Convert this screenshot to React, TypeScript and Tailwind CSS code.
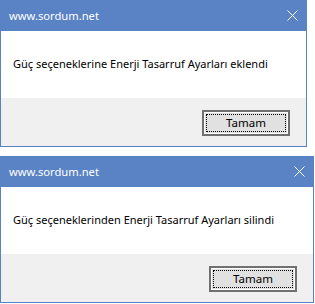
import React from "react";

function Dialog({ width, message }: { width: string; message: string }) {
  return (
    <div className={`${width} flex flex-col border border-[#5a83c6] bg-white`} style={{ fontFamily: '"Noto Sans", sans-serif' }}>
      <div className="flex h-[30px] items-center justify-between bg-[#5a83c6] pl-2 pr-[8px] text-[11.2px] text-white">
        <span className="leading-none pb-[1px]">www.sordum.net</span>
        <svg width="11" height="11" viewBox="0 0 11 11" className="mb-[1px]">
          <path d="M0.5 0.5 L10.5 10.5 M10.5 0.5 L0.5 10.5" stroke="white" strokeWidth="1" />
        </svg>
      </div>
      <div className="flex h-[67px] items-center bg-white pl-3 text-[11px] text-black">
        <span className="pb-[1px]">{message}</span>
      </div>
      <div className="flex h-[48px] items-start justify-end bg-[#f0f0f0] pr-4 pt-[12px]">
        <button className="h-[26px] w-[88px] border-2 border-[#707070] bg-[#e1e1e1] text-[11.5px] text-black shadow-[inset_0_0_0_1px_#ffffff] outline-1 outline-dotted outline-black outline-offset-[-5px]">
          Tamam
        </button>
      </div>
    </div>
  );
}

export default function App() {
  return (
    <div className="flex h-[304px] w-[315px] flex-col gap-[9px] bg-white">
      <Dialog width="w-[307px]" message="Güç seçeneklerine Enerji Tasarruf Ayarları eklendi" />
      <Dialog width="w-[314px]" message="Güç seçeneklerinden Enerji Tasarruf Ayarları silindi" />
    </div>
  );
}
